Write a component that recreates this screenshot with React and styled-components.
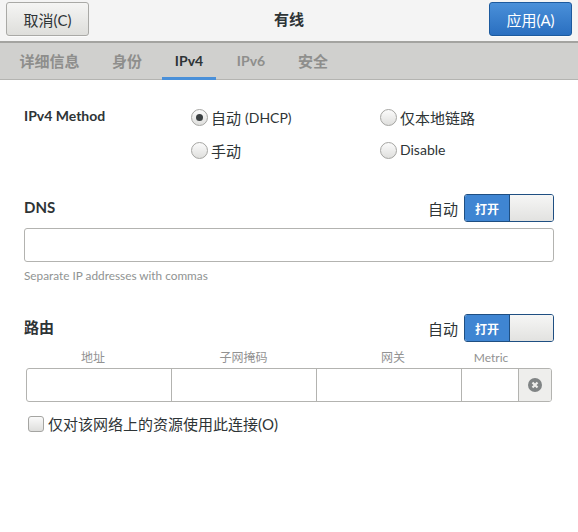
import React from "react";
import styled, { createGlobalStyle } from "styled-components";

const FONT = `"Lato", "Noto Sans CJK SC", sans-serif`;

const Global = createGlobalStyle`
  html, body { margin: 0; padding: 0; background: #fff; }
  body { font-family: ${FONT}; color: #2e3436; font-size: 15px; }
  * { box-sizing: border-box; }
`;

const Page = styled.div`
  width: 578px;
  height: 532px;
  overflow: hidden;
  background: #fff;
  display: flex;
  flex-direction: column;
`;

const Header = styled.header`
  height: 43px;
  flex: none;
  display: flex;
  align-items: flex-start;
  justify-content: space-between;
  padding: 2px 6px 0;
  background: #f4f4f4;
  border-bottom: 2px solid #a3a3a0;
`;

const Button = styled.div`
  width: 83px;
  height: 34px;
  border-radius: 3px;
  display: flex;
  align-items: center;
  justify-content: center;
  font-size: 15px;
  color: ${(p) => (p.$primary ? "#fff" : "#2e3436")};
  border: 1px solid ${(p) => (p.$primary ? "#1c5a9e" : "#a9a9a6")};
  background: ${(p) =>
    p.$primary
      ? "linear-gradient(#4a90d9, #2a6fc0)"
      : "linear-gradient(#f5f5f4, #dededb)"};
  box-shadow: 0 1px 0 rgba(255, 255, 255, 0.6);
`;

const Title = styled.div`
  font-size: 15px;
  font-weight: 700;
  line-height: 34px;
  color: #2e3436;
`;

const Tabs = styled.nav`
  height: 37px;
  flex: none;
  display: flex;
  gap: 8px;
  padding-left: 7px;
  background: #d0d0ce;
  border-bottom: 1px solid #b4b4b1;
`;

const Tab = styled.div`
  padding: 1px 0 0;
  width: ${(p) => p.$w}px;
  height: 37px;
  display: flex;
  align-items: center;
  justify-content: center;
  font-size: ${(p) => (p.$latin ? 14 : 15)}px;
  font-weight: 700;
  color: ${(p) => (p.$active ? "#2e3436" : "#8e8e8c")};
  border-bottom: 3px solid ${(p) => (p.$active ? "#4a90d9" : "transparent")};
`;

const Content = styled.main`
  padding: 0 24px;
  display: flex;
  flex-direction: column;
`;

const MethodGrid = styled.div`
  display: grid;
  grid-template-columns: 167px 189px 1fr;
  grid-auto-rows: 33px;
  margin-top: 21px;
  align-items: center;
`;

const SectionLabel = styled.div`
  font-size: 15px;
  font-weight: 700;
  color: #2e3436;
  line-height: 24px;
  padding-bottom: 2px;
`;

const MethodLabel = styled(SectionLabel)`
  font-size: 14px;
  padding-bottom: 4px;
`;

const RadioRow = styled.label`
  display: flex;
  align-items: center;
  gap: 3px;
  font-size: 15px;
  color: #2e3436;
`;

const LatinNote = styled.span`
  font-size: 14px;
  margin-left: ${(p) => (p.$lead ? 4 : 0)}px;
  padding-bottom: ${(p) => (p.$raised ? 3 : 0)}px;
`;

const RadioDot = styled.span`
  width: 17px;
  height: 17px;
  border-radius: 50%;
  flex: none;
  display: flex;
  align-items: center;
  justify-content: center;
  border: 1px solid #a5a5a2;
  background: linear-gradient(#fbfbfb, #dfdfdd);
  &::after {
    content: "";
    width: 7px;
    height: 7px;
    border-radius: 50%;
    background: ${(p) => (p.$on ? "#3a3f41" : "transparent")};
  }
`;

const RadioText = styled.span`
  display: flex;
  align-items: center;
`;

const Section = styled.section`
  margin-top: ${(p) => p.$top}px;
`;

const SectionHead = styled.div`
  display: flex;
  align-items: center;
  justify-content: space-between;
  height: 28px;
`;

const AutoGroup = styled.div`
  display: flex;
  align-items: center;
  gap: 6px;
  font-size: 15px;
`;

const Switch = styled.div`
  width: 90px;
  height: 28px;
  display: flex;
  border: 1px solid #1f4f82;
  border-radius: 3px;
  overflow: hidden;
`;

const SwitchOn = styled.div`
  width: 44px;
  background: #3f85d2;
  color: #fff;
  font-size: 12px;
  font-weight: 700;
  display: flex;
  align-items: center;
  justify-content: center;
`;

const SwitchThumb = styled.div`
  flex: 1;
  border-left: 1px solid #1f4f82;
  background: linear-gradient(#f6f6f5, #e2e2e0);
`;

const Entry = styled.div`
  height: 34px;
  margin-top: 6px;
  border: 1px solid #b3b3b0;
  border-radius: 3px;
  background: #fff;
`;

const Hint = styled.div`
  font-size: 11.8px;
  color: #8f9392;
  margin-top: 6px;
  line-height: 15px;
`;

const RouteHead = styled.div`
  display: grid;
  grid-template-columns: 134px 167px 132px 64px;
  margin: 8px 0 0 2px;
  font-size: 12px;
  line-height: 15px;
  color: #929292;
  text-align: center;
`;

const RouteRow = styled.div`
  display: grid;
  grid-template-columns: 145px 145px 145px 57px 1fr;
  height: 34px;
  margin: 3px 0 0 2px;
  width: 526px;
  border: 1px solid #b3b3b0;
  border-radius: 3px;
  overflow: hidden;
`;

const RouteCell = styled.div`
  border-right: 1px solid #b3b3b0;
`;

const RemoveCell = styled.div`
  background: #eeeeec;
  display: flex;
  align-items: center;
  justify-content: center;
`;

const CheckRow = styled.label`
  display: flex;
  align-items: center;
  gap: 4px;
  margin: 11px 0 0 4px;
  font-size: 15px;
  color: #2e3436;
`;

const CheckBox = styled.span`
  width: 16px;
  height: 16px;
  flex: none;
  border: 1px solid #a5a5a2;
  border-radius: 3px;
  background: linear-gradient(#fafafa, #dededc);
`;

const RemoveIcon = () => (
  <svg width="14" height="14" viewBox="0 0 14 14">
    <circle cx="7" cy="7" r="7" fill="#808485" />
    <path d="M4.5 4.5l5 5M9.5 4.5l-5 5" stroke="#eeeeec" strokeWidth="2.2" />
  </svg>
);

const AutoSwitch = () => (
  <AutoGroup>
    自动
    <Switch>
      <SwitchOn>打开</SwitchOn>
      <SwitchThumb />
    </Switch>
  </AutoGroup>
);

export default function App() {
  return (
    <Page>
      <Global />
      <Header>
        <Button>取消(C)</Button>
        <Title>有线</Title>
        <Button $primary>应用(A)</Button>
      </Header>
      <Tabs>
        <Tab $w={85}>详细信息</Tab>
        <Tab $w={54}>身份</Tab>
        <Tab $w={54} $latin $active>IPv4</Tab>
        <Tab $w={54} $latin>IPv6</Tab>
        <Tab $w={54}>安全</Tab>
      </Tabs>
      <Content>
        <MethodGrid>
          <MethodLabel>IPv4 Method</MethodLabel>
          <RadioRow><RadioDot $on /><RadioText>自动<LatinNote $lead>(DHCP)</LatinNote></RadioText></RadioRow>
          <RadioRow><RadioDot />仅本地链路</RadioRow>
          <span />
          <RadioRow><RadioDot />手动</RadioRow>
          <RadioRow><RadioDot /><LatinNote $raised>Disable</LatinNote></RadioRow>
        </MethodGrid>
        <Section $top={27}>
          <SectionHead>
            <SectionLabel>DNS</SectionLabel>
            <AutoSwitch />
          </SectionHead>
          <Entry />
          <Hint>Separate IP addresses with commas</Hint>
        </Section>
        <Section $top={31}>
          <SectionHead>
            <SectionLabel>路由</SectionLabel>
            <AutoSwitch />
          </SectionHead>
          <RouteHead>
            <span>地址</span>
            <span>子网掩码</span>
            <span>网关</span>
            <span>Metric</span>
          </RouteHead>
          <RouteRow>
            <RouteCell />
            <RouteCell />
            <RouteCell />
            <RouteCell />
            <RemoveCell><RemoveIcon /></RemoveCell>
          </RouteRow>
          <CheckRow><CheckBox />仅对该网络上的资源使用此连接(O)</CheckRow>
        </Section>
      </Content>
    </Page>
  );
}
